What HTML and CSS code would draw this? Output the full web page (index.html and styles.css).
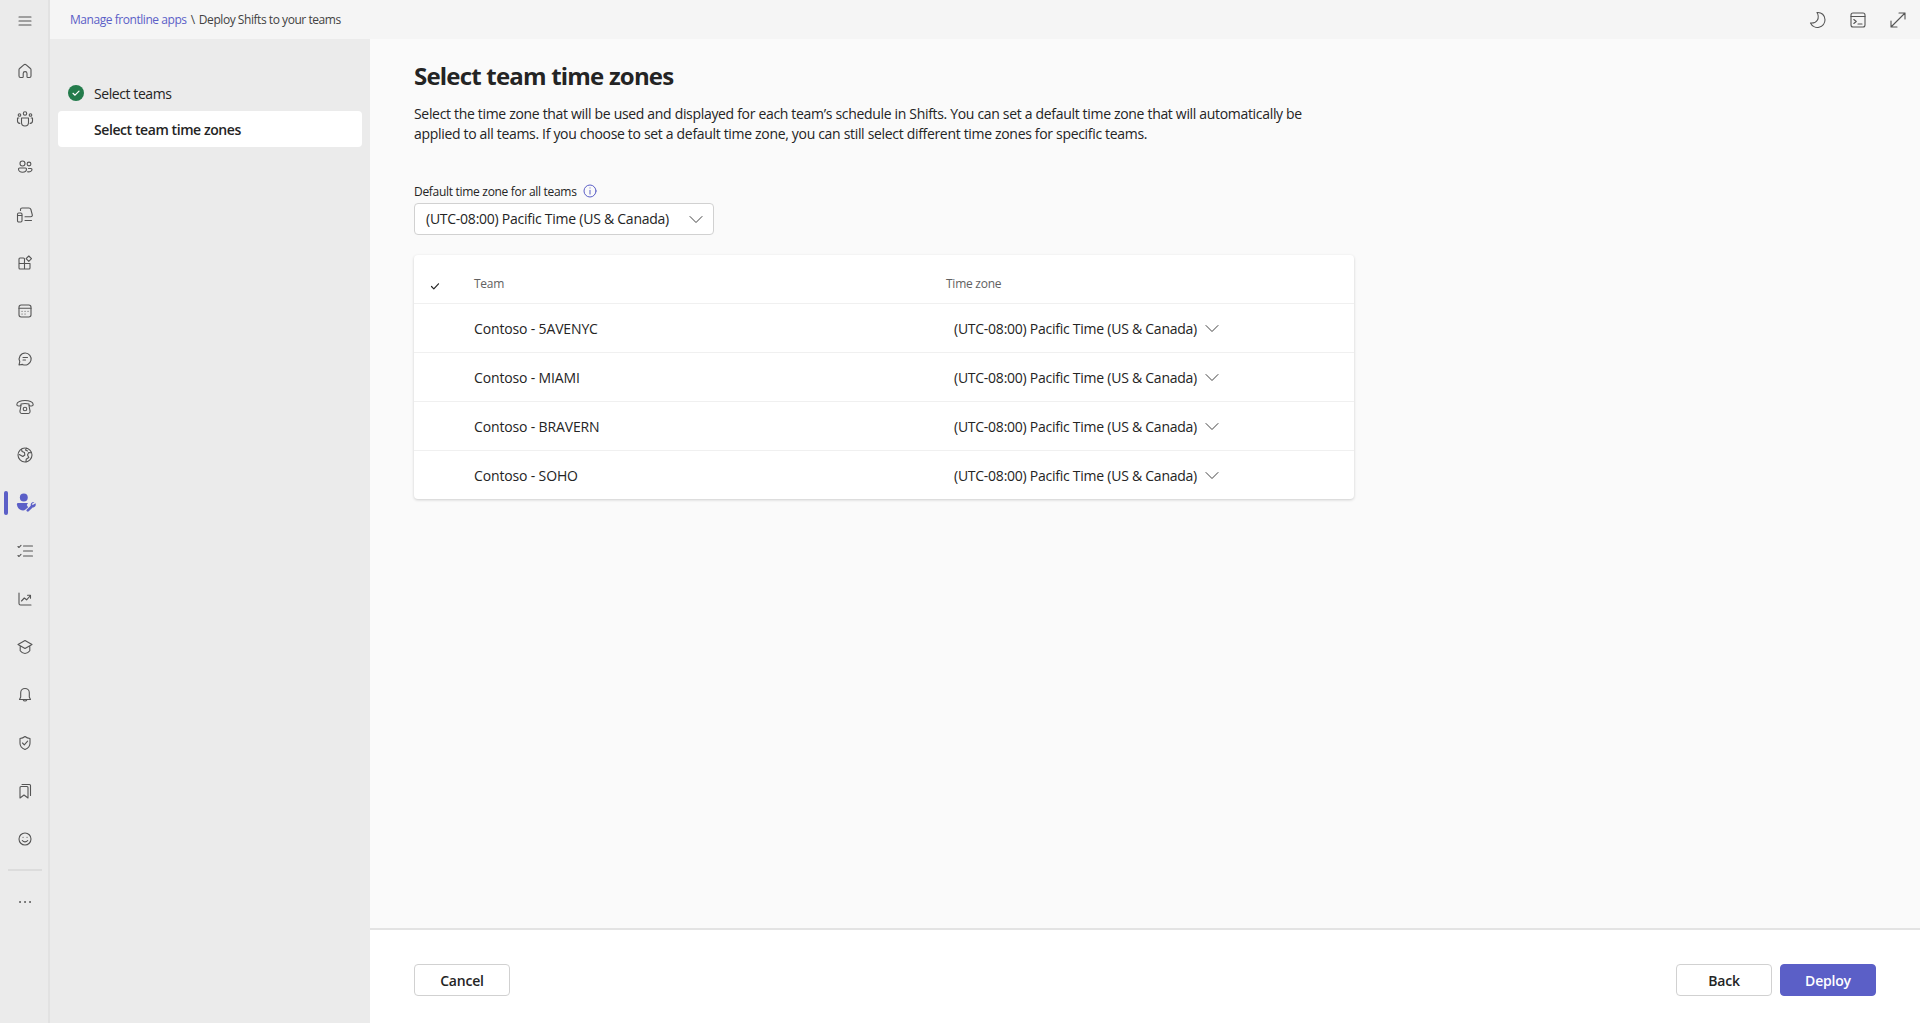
FILE: index.html
```html
<!DOCTYPE html>
<html lang="en">
<head>
  <meta charset="UTF-8" />
  <title>Deploy Shifts to your teams</title>
  <link rel="stylesheet" href="styles.css">
</head>
<body>
  <div class="app">
    <nav class="rail">
      <div class="rail-top">
        <svg class="icon" viewBox="0 0 20 20"><path d="M4 6h12M4 10h12M4 14h12"/></svg>
      </div>
      <div class="rail-item"><svg class="icon" viewBox="0 0 20 20"><path d="M8.8 3.9a1.8 1.8 0 0 1 2.4 0l4.2 3.6c.4.3.6.8.6 1.3V15a1.5 1.5 0 0 1-1.5 1.5h-1.7a.8.8 0 0 1-.8-.8v-3.200a1.900 1.900 0 0 0-3.800 0v3.200a.8.8 0 0 1-.8.8H5.500A1.500 1.500 0 0 1 4 15V8.800c0-.5.2-1 .6-1.300z"/></svg></div>
      <div class="rail-item"><svg class="icon" viewBox="0 0 20 20"><circle cx="10" cy="4.500" r="1.700"/><circle cx="4.500" cy="6" r="1.300"/><circle cx="15.500" cy="6" r="1.300"/><path d="M6.500 9h7v4.500a3.500 3.500 0 0 1-7 0zM3.800 9H2.500v3c0 1.400 1 2.300 2.300 2.400M16.200 9h1.300v3c0 1.400-1 2.300-2.300 2.400"/></svg></div>
      <div class="rail-item"><svg class="icon" viewBox="0 0 20 20"><circle cx="7.500" cy="6.500" r="2.500"/><circle cx="14" cy="7" r="1.900"/><path d="M4.500 11h6a1 1 0 0 1 1 1c0 1.900-1.700 3.200-4 3.200s-4-1.300-4-3.200a1 1 0 0 1 1-1zM12.500 14.800c2.800.3 4.500-.7 4.500-2.300a1 1 0 0 0-1-1h-2.500"/></svg></div>
      <div class="rail-item"><svg class="icon" viewBox="0 0 20 20"><rect x="2.500" y="8" width="4.500" height="9" rx="1.200"/><path d="M2.800 10.500h4M5.500 5.500V4.600c0-.9.700-1.600 1.600-1.600h6.800c1 0 1.700.6 2 1.500l1.400 5.300c.3 1.100-.5 2-1.600 2H10M10 15.500h6.500"/></svg></div>
      <div class="rail-item"><svg class="icon" viewBox="0 0 20 20"><rect x="4" y="5" width="5.500" height="5.500" rx="1"/><path d="M4 10.500h5.500V16H5a1 1 0 0 1-1-1zM9.500 10.500H15V15a1 1 0 0 1-1 1H9.500z"/><path d="M13.800 3l2.700 2.700-2.700 2.700-2.700-2.700z"/></svg></div>
      <div class="rail-item"><svg class="icon" viewBox="0 0 20 20"><rect x="4" y="4" width="12" height="12" rx="2.200"/><path d="M4 7.300h12M7 10.300h.1M10 10.300h.1M13 10.300h.1M7 13h.1M10 13h.1"/></svg></div>
      <div class="rail-item"><svg class="icon" viewBox="0 0 20 20"><path d="M10.200 4a6 6 0 1 1-2.700 11.400L4 16l.8-3.300A6 6 0 0 1 10.200 4z"/><path d="M8 8.500h4.500M8 11h2.500"/></svg></div>
      <div class="rail-item"><svg class="icon" viewBox="0 0 20 20"><path d="M1.800 7.500C1.800 5 6 3.500 10 3.500s8.200 1.500 8.200 4c0 1.200-.8 1.500-1.800 1.500h-1.200c-.8 0-1.200-.5-1.200-1.200V7c-2.500-.6-5.500-.6-8 0v.8C6 8.500 5.600 9 4.800 9H3.600c-1 0-1.800-.3-1.800-1.500z"/><path d="M6 8.500l-1 5.500a2 2 0 0 0 2 2.500h6a2 2 0 0 0 2-2.500l-1-5.500"/><circle cx="10" cy="12" r="1.800"/></svg></div>
      <div class="rail-item"><svg class="icon" viewBox="0 0 20 20"><circle cx="10" cy="10" r="7"/><path d="M6.500 4.300l.6 2.200 2.400 1 .3 2.500-2 1.500-3.500-2M11 16.900l.2-2.600 2.600-1.800-1.300-2.500 1.200-2.500 2.800.2M11.500 3.200l-1 1.800 2 1"/></svg></div>
      <div class="rail-item is-active">
        <span class="rail-marker"></span>
        <svg class="icon icon-active" viewBox="0 0 20 20"><circle cx="8" cy="5" r="3.600" class="solid"/><path class="solid" d="M2.500 10h9.300l-1.100 1.800 1.200 2-2.400 2.200c-.6.500-1.400.8-2.200.8-2.800 0-5-2-5.600-5.500a1.200 1.200 0 0 1 .8-1.300z"/><path class="solid" d="M18.700 10.300c.5 1.500-.1 3-1.500 3.600-.4.200-.8.200-1.200.2l-3.500 3.500a1.200 1.200 0 0 1-1.700-1.700l3.500-3.500c-.2-1.300.4-2.500 1.600-3 .6-.3 1.200-.3 1.700-.2L15.200 11l.9.900z"/></svg>
      </div>
      <div class="rail-item"><svg class="icon" viewBox="0 0 20 20"><path d="M3 5.500l1 1 2-2.200M3 14.500l1 1 2-2.200M8.500 5h9M8.500 10h9M8.500 15h9"/></svg></div>
      <div class="rail-item"><svg class="icon" viewBox="0 0 20 20"><path d="M4 4v10.500c0 .9.600 1.500 1.500 1.500H16"/><path d="M6.500 12l2.800-3 2.300 1.800 3.900-4.300M12.500 6.200h3v3"/></svg></div>
      <div class="rail-item"><svg class="icon" viewBox="0 0 20 20"><path d="M10 3.500l7 4-7 4-7-4zM5.200 9.500v4.300C6.500 15.600 8 16.500 10 16.500s3.500-.9 4.800-2.700V9.500"/></svg></div>
      <div class="rail-item"><svg class="icon" viewBox="0 0 20 20"><path d="M10 3.500a4.300 4.300 0 0 0-4.300 4.300V12l-1.200 2.500h11L14.300 12V7.800A4.300 4.300 0 0 0 10 3.500zM8.200 14.700a1.900 1.900 0 0 0 3.600 0"/></svg></div>
      <div class="rail-item"><svg class="icon" viewBox="0 0 20 20"><path d="M10 3.500c1.500 1.200 3.200 1.800 5 2v4.700c0 3-1.800 5-5 6.300-3.200-1.300-5-3.300-5-6.300V5.500c1.800-.2 3.500-.8 5-2z"/><path d="M7.500 10l1.800 1.800 3.300-3.600"/></svg></div>
      <div class="rail-item"><svg class="icon" viewBox="0 0 20 20"><path d="M6 5.500h6a1 1 0 0 1 1 1V17l-4-3-4 3V6.500a1 1 0 0 1 1-1zM7 3.500h7.500a1 1 0 0 1 1 1v10"/></svg></div>
      <div class="rail-item"><svg class="icon" viewBox="0 0 20 20"><circle cx="10" cy="10" r="6"/><path d="M8 8.300h.1M12 8.300h.1M7.300 11.500c.7 1 1.600 1.400 2.700 1.400s2-.4 2.700-1.400"/></svg></div>
      <div class="rail-divider"></div>
      <div class="rail-item"><svg class="icon" viewBox="0 0 20 20"><path class="dots" d="M5 10h.1M10 10h.1M15 10h.1"/></svg></div>
    </nav>

    <div class="workspace">
      <header class="topbar">
        <div class="breadcrumb">
          <a class="crumb-link">Manage frontline apps</a>
          <span class="crumb-sep">\</span>
          <span>Deploy Shifts to your teams</span>
        </div>
        <div class="topbar-actions">
          <div class="topbar-btn"><svg class="icon" viewBox="0 0 20 20"><path d="M9 2.500c4.500-.5 8 2.800 8 7.300a7.600 7.600 0 0 1-14.500 3.200c3 .3 5.500-.6 6.800-2.800C10.600 8 10.500 5 9 2.500z"/></svg></div>
          <div class="topbar-btn"><svg class="icon" viewBox="0 0 20 20"><rect x="3" y="3" width="14" height="14" rx="2"/><path d="M3 6.500h14M5.800 9.500l2.500 2-2.500 2M10 14h4"/></svg></div>
          <div class="topbar-btn"><svg class="icon" viewBox="0 0 20 20"><path d="M3 17L17 3M11 3h6v6M3 11v6h6"/></svg></div>
        </div>
      </header>

      <div class="page">
        <aside class="steps">
          <div class="step">
            <svg class="step-check" viewBox="0 0 16 16"><circle cx="8" cy="8" r="8"/><path d="M5 8.300l2 1.900 4-4"/></svg>
            <span>Select teams</span>
          </div>
          <div class="step step-current"><span>Select team time zones</span></div>
        </aside>

        <div class="main">
          <main class="content">
            <h1>Select team time zones</h1>
            <p class="intro">Select the time zone that will be used and displayed for each team’s schedule in Shifts. You can set a default time zone that will automatically be<br>applied to all teams. If you choose to set a default time zone, you can still select different time zones for specific teams.</p>

            <div class="field-label">
              <span>Default time zone for all teams</span>
              <svg class="info" viewBox="0 0 14 14"><circle cx="7" cy="7" r="6"/><path d="M7 6.300v3.800M7 3.900v.1"/></svg>
            </div>
            <div class="select">
              <span>(UTC-08:00) Pacific Time (US &amp; Canada)</span>
              <svg class="chevron" viewBox="0 0 14 14"><path d="M1 4.500L7 10.500l6-6"/></svg>
            </div>

            <div class="table">
              <div class="table-row table-head">
                <div class="col-check"><svg class="tick" viewBox="0 0 10 10"><path d="M1.500 5.500l2.300 2.300 4.700-5"/></svg></div>
                <div class="col-team">Team</div>
                <div class="col-zone">Time zone</div>
              </div>
              <div class="table-row">
                <div class="col-check"></div>
                <div class="col-team">Contoso - 5AVENYC</div>
                <div class="col-zone zone-pick"><span>(UTC-08:00) Pacific Time (US &amp; Canada)</span><svg class="chevron" viewBox="0 0 14 14"><path d="M1 4.500L7 10.500l6-6"/></svg></div>
              </div>
              <div class="table-row">
                <div class="col-check"></div>
                <div class="col-team">Contoso - MIAMI</div>
                <div class="col-zone zone-pick"><span>(UTC-08:00) Pacific Time (US &amp; Canada)</span><svg class="chevron" viewBox="0 0 14 14"><path d="M1 4.500L7 10.500l6-6"/></svg></div>
              </div>
              <div class="table-row">
                <div class="col-check"></div>
                <div class="col-team">Contoso - BRAVERN</div>
                <div class="col-zone zone-pick"><span>(UTC-08:00) Pacific Time (US &amp; Canada)</span><svg class="chevron" viewBox="0 0 14 14"><path d="M1 4.500L7 10.500l6-6"/></svg></div>
              </div>
              <div class="table-row">
                <div class="col-check"></div>
                <div class="col-team">Contoso - SOHO</div>
                <div class="col-zone zone-pick"><span>(UTC-08:00) Pacific Time (US &amp; Canada)</span><svg class="chevron" viewBox="0 0 14 14"><path d="M1 4.500L7 10.500l6-6"/></svg></div>
              </div>
            </div>
          </main>

          <footer class="footer">
            <button class="btn">Cancel</button>
            <div class="footer-right">
              <button class="btn">Back</button>
              <button class="btn btn-primary">Deploy</button>
            </div>
          </footer>
        </div>
      </div>
    </div>
  </div>
</body>
</html>
```

FILE: styles.css
```css
:root {
  --rail-bg: #ebebeb;
  --top-bg: #f5f5f5;
  --main-bg: #fafafa;
  --text: #242424;
  --muted: #616161;
  --accent: #5b5fc7;
  --line: #f0f0f0;
  --border: #d1d1d1;
}

* {
  box-sizing: border-box;
}

html, body {
  margin: 0;
  height: 100%;
}

body {
  font-family: "Open Sans", "Noto Sans", sans-serif;
  font-size: 14px;
  color: var(--text);
  background: var(--main-bg);
  overflow: hidden;
}

.app {
  display: flex;
  height: 100vh;
}

/* left icon rail */
.rail {
  width: 50px;
  flex: none;
  background: var(--rail-bg);
  border-right: 2px solid #e2e2e2;
  padding-left: 2px;
  display: flex;
  flex-direction: column;
}

.rail-top {
  height: 47px;
  padding-bottom: 5px;
  display: flex;
  align-items: center;
  justify-content: center;
}

.rail-item {
  height: 48px;
  position: relative;
  display: flex;
  align-items: center;
  justify-content: center;
}

.rail-divider {
  height: 2px;
  margin: 6px 6px 7px;
  background: #dcdcdc;
}

.rail-marker {
  position: absolute;
  left: 2px;
  top: 12px;
  width: 4px;
  height: 24px;
  border-radius: 2px;
  background: var(--accent);
}

.icon {
  width: 20px;
  height: 20px;
  fill: none;
  stroke: #555;
  stroke-width: 1.1;
  stroke-linecap: round;
  stroke-linejoin: round;
}

.icon-active {
  width: 22px;
  height: 22px;
  margin-left: 2px;
}

.icon .solid {
  fill: var(--accent);
  stroke: none;
}

.icon .dots {
  stroke-width: 1.8;
}

.workspace {
  flex: 1;
  min-width: 0;
  display: flex;
  flex-direction: column;
}

/* top bar */
.topbar {
  height: 39px;
  flex: none;
  background: var(--top-bg);
  padding: 0 2px 0 20px;
  display: flex;
  align-items: center;
  justify-content: space-between;
}

.breadcrumb {
  font-size: 12px;
  color: #424242;
  letter-spacing: -0.45px;
}

.crumb-link {
  color: var(--accent);
}

.crumb-sep {
  margin: 0 1.5px;
}

.topbar-actions {
  display: flex;
}

.topbar-btn {
  width: 40px;
  height: 39px;
  display: flex;
  align-items: center;
  justify-content: center;
}

.page {
  flex: 1;
  min-height: 0;
  display: flex;
}

/* wizard steps */
.steps {
  width: 320px;
  flex: none;
  background: var(--rail-bg);
  padding: 36px 8px 0;
}

.step {
  height: 36px;
  display: flex;
  align-items: center;
  gap: 10px;
  padding-left: 10px;
  letter-spacing: -0.42px;
}

.step-check {
  width: 16px;
  height: 16px;
  flex: none;
}

.step-check circle {
  fill: #237b4b;
}

.step-check path {
  fill: none;
  stroke: #fff;
  stroke-width: 1.2;
  stroke-linecap: round;
  stroke-linejoin: round;
}

.step-current {
  background: #fff;
  border-radius: 4px;
  font-weight: 600;
  padding-left: 36px;
}

/* main column */
.main {
  flex: 1;
  min-width: 0;
  display: flex;
  flex-direction: column;
}

.content {
  flex: 1;
  padding: 19px 44px 0;
}

h1 {
  margin: 0;
  font-size: 24px;
  line-height: 36px;
  font-weight: 700;
  letter-spacing: -0.8px;
}

.intro {
  margin: 10px 0 0;
  line-height: 20px;
  letter-spacing: -0.32px;
  white-space: nowrap;
}

.field-label {
  margin-top: 38px;
  height: 18px;
  display: flex;
  align-items: center;
  gap: 6px;
  font-size: 12px;
  letter-spacing: -0.3px;
}

.info {
  width: 14px;
  height: 14px;
  fill: none;
  stroke: var(--accent);
  stroke-width: 1;
  stroke-linecap: round;
}

.select {
  margin-top: 3px;
  width: 300px;
  height: 32px;
  background: #fff;
  border: 1px solid var(--border);
  border-radius: 4px;
  padding: 0 10px 1px 11px;
  display: flex;
  align-items: center;
  justify-content: space-between;
  letter-spacing: -0.25px;
}

.chevron {
  width: 14px;
  height: 14px;
  fill: none;
  stroke: #424242;
  stroke-width: 1;
  stroke-linecap: round;
  stroke-linejoin: round;
}

/* team table */
.table {
  margin-top: 20px;
  width: 940px;
  background: #fff;
  border-radius: 4px;
  box-shadow: 0 1px 3px rgba(0,0,0,0.18);
}

.table-row {
  height: 49px;
  display: flex;
  align-items: center;
  border-top: 1px solid var(--line);
  letter-spacing: -0.15px;
}

.table-head {
  height: 48px;
  padding-top: 9px;
  border-top: none;
  font-size: 12px;
  color: var(--muted);
  letter-spacing: -0.25px;
}

.col-check {
  width: 60px;
  flex: none;
  padding: 4px 0 0 16px;
  display: flex;
}

.tick {
  width: 10px;
  height: 10px;
  fill: none;
  stroke: #242424;
  stroke-width: 1.2;
  stroke-linecap: round;
  stroke-linejoin: round;
}

.col-team {
  width: 472px;
  flex: none;
}

.zone-pick {
  padding-left: 8px;
  display: flex;
  align-items: center;
  gap: 8px;
  letter-spacing: -0.25px;
}

/* footer */
.footer {
  height: 95px;
  flex: none;
  background: #fff;
  border-top: 2px solid #e3e3e3;
  padding: 34px 44px 0;
  display: flex;
  justify-content: space-between;
  align-items: flex-start;
}

.footer-right {
  display: flex;
  gap: 8px;
}

.btn {
  width: 96px;
  height: 32px;
  padding: 0;
  background: #fff;
  border: 1px solid var(--border);
  border-radius: 4px;
  font: 600 14px "Open Sans", "Noto Sans", sans-serif;
  letter-spacing: -0.2px;
  color: var(--text);
}

.btn-primary {
  background: var(--accent);
  border-color: var(--accent);
  color: #fff;
}
```
